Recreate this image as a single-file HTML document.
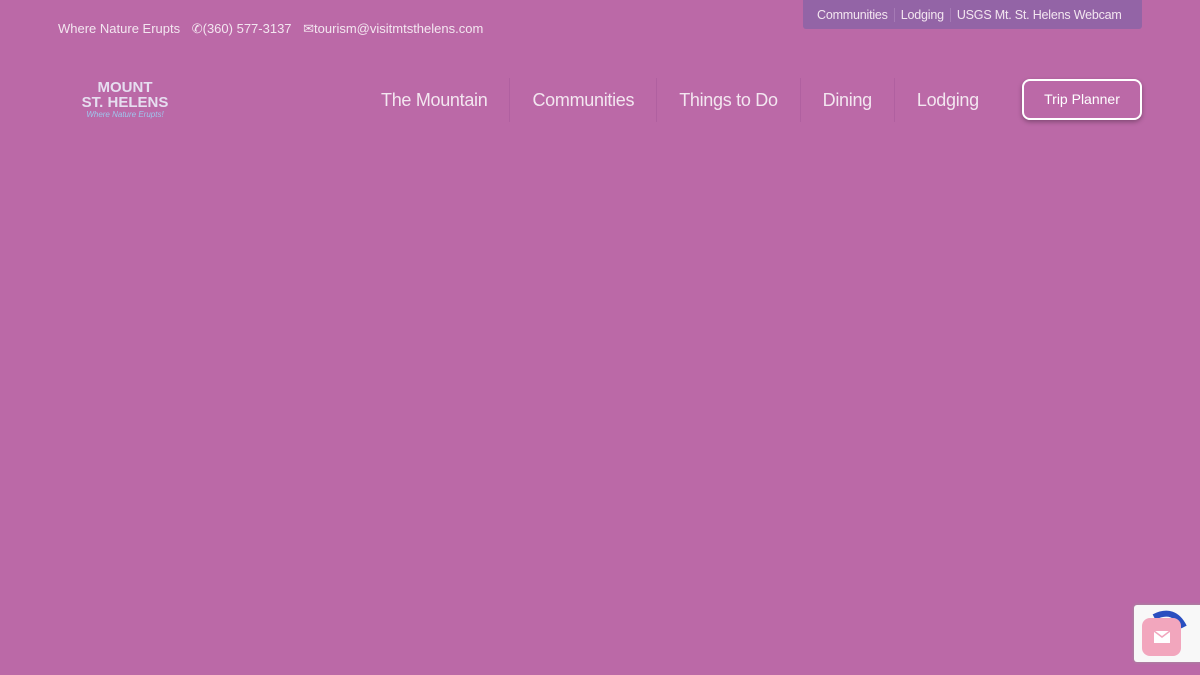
<!DOCTYPE html>
<html><head><meta charset="utf-8"><style>
*{margin:0;padding:0;box-sizing:border-box}
body{width:1200px;height:675px;background:#bb69a7;font-family:"Liberation Sans",sans-serif;color:#f3e6f0;position:relative;overflow:hidden}
.top{position:absolute;top:21px;left:58px;font-size:13px;white-space:nowrap}
.top span{margin-right:8px}
.util{position:absolute;left:803px;top:0;width:339px;height:29px;background:#9364a6;border-radius:0 0 3px 3px;font-size:12.5px;display:flex;align-items:center;padding-left:14px;white-space:nowrap;letter-spacing:-0.2px}
.util span{padding:0 6px;border-left:1px solid #a57ab5}
.util span:first-child{border:none;padding-left:0}
.logo{position:absolute;left:81px;top:80px;width:88px;text-align:center;color:#e6def0;font-weight:bold;line-height:15px;font-size:15px}
.logo i{display:block;font-size:8px;line-height:10px;color:#9ec6ee;font-weight:normal}
.nav{position:absolute;top:78px;left:361px;display:flex;font-size:18px;height:44px;align-items:center;letter-spacing:-0.3px;white-space:nowrap}
.nav div{padding:0 22px;border-left:1px solid #b060a0;line-height:44px}
.nav div:first-child{border:none;padding-left:20px}
.btn{position:absolute;left:1022px;top:79px;width:120px;height:41px;border:2px solid #fff;border-radius:8px;font-size:14px;color:#fff;text-align:center;line-height:37px;box-shadow:0 2px 5px rgba(0,0,0,.3)}
.rc{position:absolute;left:1134px;top:605px;width:70px;height:57px;background:#f8f8f8;border-radius:3px;box-shadow:0 0 3px #999}
.mail{position:absolute;left:1142px;top:618px;width:39px;height:38px;background:#f2a6bd;border-radius:8px}
</style></head><body>
<div class="top"><span>Where Nature Erupts</span> <span>✆(360) 577-3137</span> <span>✉tourism@visitmtsthelens.com</span></div>
<div class="util"><span>Communities</span><span>Lodging</span><span>USGS Mt. St. Helens Webcam</span></div>
<div class="logo">MOUNT<br>ST. HELENS<i>Where Nature Erupts!</i></div>
<div class="nav"><div>The Mountain</div><div>Communities</div><div>Things to Do</div><div>Dining</div><div>Lodging</div></div>
<div class="btn">Trip Planner</div>
<div class="rc"><svg width="70" height="57"><path d="M20 12 Q40 2 50 22" stroke="#2a4fc0" stroke-width="6" fill="none"/></svg></div>
<div class="mail"><svg width="39" height="38"><rect x="12" y="13" width="16" height="12" fill="#fff"/><path d="M12 13l8 6 8-6" stroke="#f2a6bd" stroke-width="1.5" fill="none"/></svg></div>
</body></html>
